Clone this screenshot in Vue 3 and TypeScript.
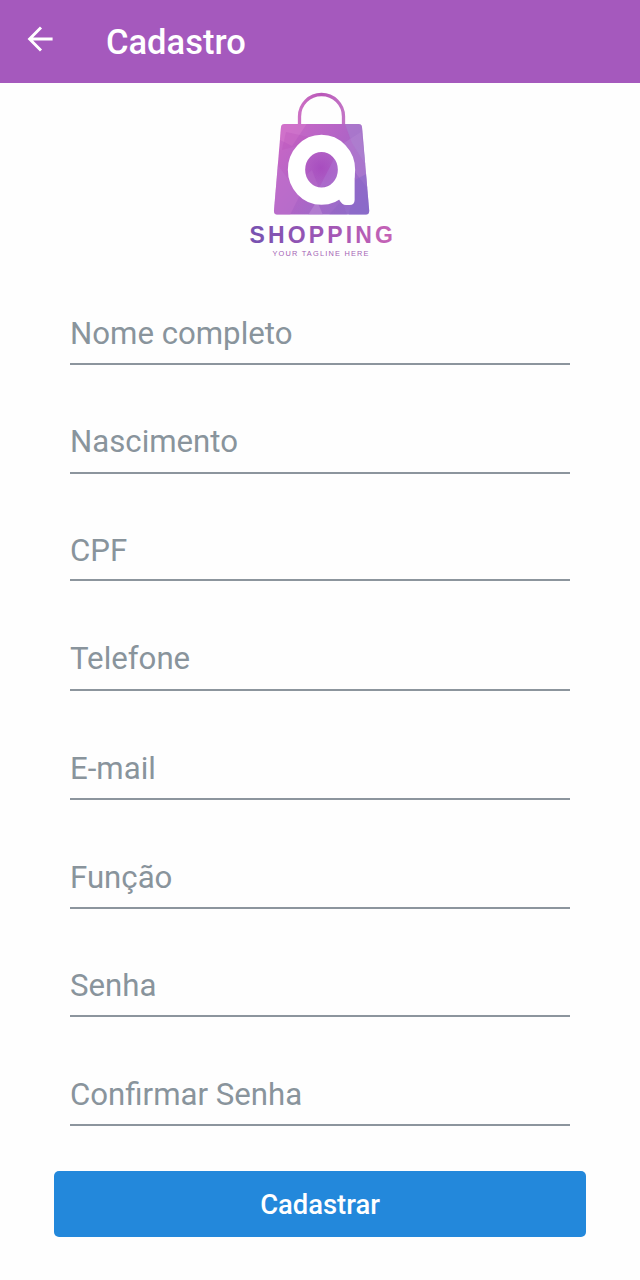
<script setup lang="ts">
import { reactive } from 'vue'

interface Field {
  key: string
  label: string
  type: string
}

const fields: Field[] = [
  { key: 'nome', label: 'Nome completo', type: 'text' },
  { key: 'nascimento', label: 'Nascimento', type: 'text' },
  { key: 'cpf', label: 'CPF', type: 'text' },
  { key: 'telefone', label: 'Telefone', type: 'tel' },
  { key: 'email', label: 'E-mail', type: 'email' },
  { key: 'funcao', label: 'Função', type: 'text' },
  { key: 'senha', label: 'Senha', type: 'password' },
  { key: 'confirmar', label: 'Confirmar Senha', type: 'password' },
]

const form = reactive<Record<string, string>>({})
</script>

<template>
  <main class="screen">
    <header class="bar">
      <button class="back" type="button" aria-label="Voltar">
        <svg width="26" height="26" viewBox="0 0 26 26" fill="none" stroke="#fff" stroke-width="2.900">
          <path d="M25.600 13H3M14 1.500L2.600 13L14 24.500" />
        </svg>
      </button>
      <h1 class="title">Cadastro</h1>
    </header>

    <svg class="logo" width="160" height="180" viewBox="240 84 160 180">
      <defs>
        <linearGradient id="bag" gradientUnits="userSpaceOnUse" x1="278" y1="132" x2="368" y2="205">
          <stop offset="0" stop-color="#ca67c6" />
          <stop offset="0.48" stop-color="#b064c6" />
          <stop offset="1" stop-color="#8f70cb" />
        </linearGradient>
        <linearGradient id="handle" x1="0" y1="0" x2="1" y2="0">
          <stop offset="0" stop-color="#cc70c4" />
          <stop offset="0.5" stop-color="#b957b8" />
          <stop offset="1" stop-color="#c273c5" />
        </linearGradient>
        <linearGradient id="word" gradientUnits="userSpaceOnUse" x1="250" y1="0" x2="394" y2="0">
          <stop offset="0" stop-color="#7652b0" />
          <stop offset="0.5" stop-color="#9d55b5" />
          <stop offset="1" stop-color="#c763b6" />
        </linearGradient>
        <radialGradient id="core">
          <stop offset="0" stop-color="#a84dbf" />
          <stop offset="1" stop-color="#a84dbf" stop-opacity="0" />
        </radialGradient>
        <clipPath id="shape">
          <path d="M284.500 124H358.500Q361.600 124 362 127L369.200 210.500Q369.400 214.500 366 214.500H277Q273.800 214.500 274 210.500L281 127Q281.400 124 284.500 124Z" />
        </clipPath>
      </defs>
      <path d="M299.500 125V116.500A22 22 0 0 1 343.500 116.500V125" fill="none" stroke="url(#handle)" stroke-width="3.300" />
      <g clip-path="url(#shape)">
        <rect x="272" y="122" width="100" height="95" fill="url(#bag)" />
        <path d="M272 122H308L292 146L278 139Z" fill="#dc83cf" opacity=".4" />
        <path d="M286 132L322 140L282 150Z" fill="#b84fb9" opacity=".3" />
        <path d="M345 124H364L369 170L352 143Z" fill="#a487d0" opacity=".5" />
        <path d="M361 132L336 148L369 190Z" fill="#b585d2" opacity=".45" />
        <path d="M274 160L300 195L290 215H272Z" fill="#c073cd" opacity=".5" />
        <path d="M308 215L317 201L323 215Z" fill="#c08fd8" opacity=".5" />
        <path d="M329 215L342 200L347 215Z" fill="#8a60c0" opacity=".3" />
        <path d="M355 180L370 172V215H349Z" fill="#8665c7" opacity=".5" />
        <circle cx="321" cy="168" r="22" fill="url(#core)" />
        <path d="M319 188L335 157L345 180Z" fill="#b07bd4" opacity=".4" />
        <path d="M305 176L312 170L319 188L309 188Z" fill="#ba73cb" opacity=".35" />
      </g>
      <ellipse cx="321.500" cy="169.800" rx="25" ry="26.400" fill="none" stroke="#fff" stroke-width="17.300" />
      <path d="M338 170H354.600V200Q354.600 205 349.500 205H346Q342 205 339.200 199.800Z" fill="#fff" />
      <text x="249.500" y="243" class="brand" textLength="143.500" fill="url(#word)">SHOPPING</text>
      <text x="272.500" y="255.900" class="tagline" textLength="96">YOUR TAGLINE HERE</text>
    </svg>

    <form class="form" @submit.prevent>
      <div class="fields">
        <input
          v-for="field in fields"
          :key="field.key"
          v-model="form[field.key]"
          class="field"
          :type="field.type"
          :placeholder="field.label"
          :aria-label="field.label"
        />
      </div>
      <button class="submit" type="submit">Cadastrar</button>
    </form>
  </main>
</template>

<style>
body {
  margin: 0;
  background: #fefefe;
}
</style>

<style scoped>
.screen {
  display: flex;
  flex-direction: column;
  width: 640px;
  height: 1280px;
  overflow: hidden;
  background: #fefefe;
  font-family: Roboto, sans-serif;
}

.bar {
  display: flex;
  align-items: center;
  flex: none;
  height: 82.5px;
  background: #a559bd;
  color: #fff;
}

.back {
  display: flex;
  margin: 0 0 4px 27px;
  padding: 0;
  border: 0;
  background: none;
}

.title {
  margin: 1px 0 0 53px;
  font-size: 34.5px;
  font-weight: 500;
  line-height: 40px;
}

.logo {
  flex: none;
  margin: 1.5px 0 0 240px;
}

.brand {
  font: bold 23px "Liberation Sans", sans-serif;
}

.tagline {
  font: 7.4px "Liberation Sans", sans-serif;
  fill: #a463b5;
}

.form {
  display: flex;
  flex-direction: column;
  padding: 0 54px;
}

.fields {
  display: grid;
  grid-template-rows: 101px 109px 107px 110px 109px 109px 108px 109px;
  margin: 0 16px 45px;
}

.field {
  align-self: end;
  box-sizing: border-box;
  width: 100%;
  height: 54px;
  margin: 0;
  padding: 0 0 7px;
  border: 0;
  border-bottom: 2px solid #8c959d;
  border-radius: 0;
  outline: 0;
  background: none;
  color: #37474f;
  font: 400 31.2px Roboto, sans-serif;
}

.field:nth-child(2),
.field:nth-child(4) {
  padding-bottom: 9px;
}

.field:nth-child(3) {
  padding-bottom: 5px;
}

.field::placeholder {
  color: #89949c;
  opacity: 1;
}

.submit {
  height: 66px;
  padding: 2px 0 0;
  border: 0;
  border-radius: 5px;
  background: #2388db;
  color: #fff;
  font: 500 27.4px Roboto, sans-serif;
}
</style>
